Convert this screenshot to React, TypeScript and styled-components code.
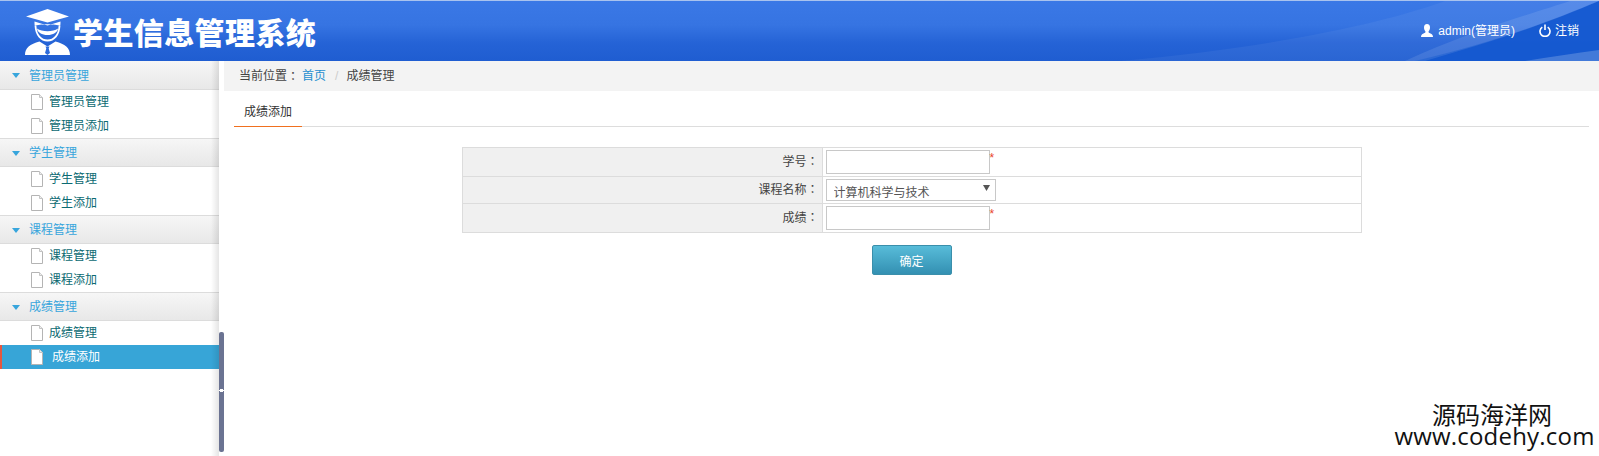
import React from "react";
import styled, { createGlobalStyle } from "styled-components";

const Global = createGlobalStyle`
  html, body { margin: 0; padding: 0; background: #fff; overflow: hidden; }
  body { font-family: "Liberation Sans", "Noto Sans CJK SC", sans-serif; font-size: 12px; color: #333; }
  * { box-sizing: border-box; }
`;

const Page = styled.div`
  position: relative;
  width: 1599px;
  height: 456px;
  overflow: hidden;
  display: flex;
  flex-direction: column;
`;

const Header = styled.header`
  position: relative;
  flex: 0 0 61px;
  display: flex;
  align-items: center;
  justify-content: space-between;
  padding: 0 20px 0 25px;
  border-top: 1px solid #a9c3ee;
  background: linear-gradient(180deg, #3a78e6 0%, #3674e2 40%, #2563d6 70%, #1f5dd1 100%);
  color: #fff;
  overflow: hidden;
`;

const Swoosh = styled.svg`
  position: absolute;
  inset: 0;
  width: 100%;
  height: 100%;
`;

const Brand = styled.div`
  position: relative;
  display: flex;
  align-items: center;
  gap: 3px;
`;

const Logo = styled.svg`
  width: 45px;
  height: 47px;
  margin-top: 3px;
  flex: none;
`;

const Title = styled.h1`
  margin: 0;
  font-family: "Noto Sans CJK SC", sans-serif;
  font-size: 30px;
  line-height: 36px;
  font-weight: 900;
  letter-spacing: 0.4px;
  white-space: nowrap;
`;

const UserBar = styled.div`
  position: relative;
  display: flex;
  align-items: center;
  margin-top: -1px;
`;

const UserLink = styled.a<{ $gap: number; $after?: number }>`
  display: flex;
  align-items: center;
  gap: ${(p) => p.$gap}px;
  margin-right: ${(p) => p.$after ?? 0}px;
  color: #fff;
  line-height: 16px;
  white-space: nowrap;
`;

const Body = styled.div`
  flex: 1;
  display: flex;
  min-height: 0;
`;

const Sidebar = styled.nav`
  flex: 0 0 219px;
  position: relative;
  background: #fff;
`;

const SideShade = styled.div`
  position: absolute;
  top: 0;
  bottom: 0;
  right: 0;
  width: 8px;
  background: linear-gradient(90deg, rgba(0, 0, 0, 0), rgba(0, 0, 0, 0.1));
  pointer-events: none;
`;

const GroupHead = styled.div`
  height: 29px;
  display: flex;
  align-items: center;
  padding: 1px 0 0 12px;
  gap: 9px;
  color: #37a5dc;
  background: linear-gradient(180deg, #f6f6f6, #e8e8e8);
  border-bottom: 1px solid #dcdcdc;
  line-height: 16px;
`;

const GroupHeadRow = styled(GroupHead)<{ $first?: boolean }>`
  border-top: ${(p) => (p.$first ? "none" : "1px solid #dcdcdc")};
`;

const Caret = styled.i`
  width: 0;
  height: 0;
  border-left: 4.5px solid transparent;
  border-right: 4.5px solid transparent;
  border-top: 5px solid #37a5dc;
`;

const Item = styled.div<{ $active?: boolean }>`
  height: 24px;
  display: flex;
  align-items: center;
  padding-left: ${(p) => (p.$active ? 29 : 31)}px;
  gap: ${(p) => (p.$active ? 9 : 6)}px;
  color: ${(p) => (p.$active ? "#fff" : "#0b6a72")};
  background: ${(p) => (p.$active ? "#37a5d7" : "transparent")};
  border-left: ${(p) => (p.$active ? "2px solid #e5573f" : "none")};
  line-height: 16px;
`;

const DocIcon = styled.svg`
  width: 12px;
  height: 16px;
  flex: none;
  margin-top: -1px;
`;

const Splitter = styled.div`
  flex: 0 0 5px;
  background: #fff;
  position: relative;
`;

const SplitBar = styled.div`
  position: absolute;
  left: 0;
  width: 5px;
  top: 271px;
  height: 120px;
  border-radius: 2px;
  background: #6b7392;
`;

const SplitGrip = styled.div`
  position: absolute;
  left: 0;
  top: 56px;
  width: 5px;
  height: 5px;
  background:
    linear-gradient(#fff, #fff) center / 5px 1px no-repeat,
    linear-gradient(#fff, #fff) center / 3px 3px no-repeat;
`;

const Main = styled.main`
  flex: 1;
  min-width: 0;
  display: flex;
  flex-direction: column;
`;

const Crumbs = styled.div`
  height: 30px;
  display: flex;
  align-items: center;
  padding-left: 15px;
  background: #f3f3f3;
  color: #444;
  line-height: 16px;
`;

const Colon = styled.span`
  font-family: "Noto Sans CJK TC", sans-serif;
`;

const CrumbLink = styled.a`
  color: #1f8fd0;
  margin-left: 3px;
`;

const CrumbSep = styled.span`
  color: #ccc;
  margin: 0 8px 0 9px;
`;

const TabBar = styled.div`
  margin: 0 10px;
  height: 36px;
  display: flex;
  align-items: flex-end;
  border-bottom: 1px solid #dddddd;
`;

const Tab = styled.div`
  width: 68px;
  height: 36px;
  margin-bottom: -1px;
  padding-top: 13px;
  text-align: center;
  color: #333;
  line-height: 16px;
  border-bottom: 1px solid #f0701f;
`;

const Table = styled.table`
  width: 900px;
  margin: 20px auto 0;
  border-collapse: collapse;
  table-layout: fixed;
`;

const LabelCell = styled.td`
  width: 360px;
  padding: 0 3px 2px 0;
  text-align: right;
  background: #f0f0f0;
  border: 1px solid #dcdcdc;
  color: #444;
  line-height: 16px;
`;

const FieldCell = styled.td`
  padding: 0 0 0 3px;
  border: 1px solid #dcdcdc;
`;

const Row = styled.tr<{ $h: number }>`
  height: ${(p) => p.$h}px;
`;

const FieldWrap = styled.div`
  display: flex;
  align-items: flex-start;
`;

const Input = styled.input`
  display: block;
  width: 164px;
  height: 24px;
  padding: 0 4px;
  border: 1px solid #c8c8c8;
  background: #fff;
  outline: none;
`;

const Star = styled.span`
  color: #e8452a;
  font-size: 12px;
  line-height: 14px;
  margin-top: 1px;
`;

const Select = styled.select`
  display: block;
  width: 170px;
  height: 22px;
  padding: 2px 0 0 7px;
  border: 1px solid #c8c8c8;
  border-radius: 0;
  appearance: none;
  background: #fff url("data:image/svg+xml,%3Csvg xmlns='http://www.w3.org/2000/svg' width='7' height='6'%3E%3Cpath d='M0 0h7L3.500 6z' fill='%23555'/%3E%3C/svg%3E") no-repeat 156px 5px;
  color: #555;
  font-family: "Noto Sans CJK SC", sans-serif;
  font-size: 12px;
  outline: none;
`;

const Actions = styled.div`
  display: flex;
  justify-content: center;
  margin-top: 12px;
`;

const Button = styled.button`
  width: 80px;
  height: 30px;
  padding: 0;
  border: 1px solid #3a8fab;
  border-radius: 2px;
  background: linear-gradient(180deg, #58bcd9, #3390b2);
  color: #fff;
  font-family: "Noto Sans CJK SC", sans-serif;
  font-size: 12px;
`;

const Watermark = styled.div`
  position: absolute;
  right: 3px;
  bottom: 9px;
  width: 203px;
  color: #111;
  text-align: center;
  font-size: 24px;
  line-height: 22px;
  font-family: "Noto Sans CJK SC", sans-serif;
`;

const WatermarkName = styled.div`
  padding-right: 5px;
`;

const WatermarkUrl = styled.div`
  font-family: "Open Sans", "Noto Sans", sans-serif;
  letter-spacing: 0.2px;
  white-space: nowrap;
`;

const Doc = () => (
  <DocIcon viewBox="0 0 12 16">
    <path d="M.5.5h8l3 3v12H.5z" fill="#fff" stroke="#b4b4b4" />
    <path d="M8.5.5v3h3" fill="#eee" stroke="#c4c4c4" />
  </DocIcon>
);

const groups = [
  { name: "管理员管理", items: ["管理员管理", "管理员添加"] },
  { name: "学生管理", items: ["学生管理", "学生添加"] },
  { name: "课程管理", items: ["课程管理", "课程添加"] },
  { name: "成绩管理", items: ["成绩管理", "成绩添加"] },
];

export default function App() {
  return (
    <Page>
      <Global />
      <Header>
        <Swoosh viewBox="0 0 1599 60" preserveAspectRatio="none">
          <path d="M1120 60C1280 46 1390 20 1445 0H1599V60Z" fill="#fff" opacity="0.05" />
          <path d="M1415 60C1500 40 1550 20 1599 0V60Z" fill="#1358cf" opacity="0.9" />
          <path d="M1405 60C1470 30 1540 10 1570 0H1599C1540 26 1480 44 1425 60Z" fill="#fff" opacity="0.1" />
          <path d="M1525 60C1550 56 1575 52 1599 49V60Z" fill="#fff" opacity="0.2" />
        </Swoosh>
        <Brand>
          <Logo viewBox="0 0 45 47">
            <path d="M1 7.500 22.500 0 44 7.500 22.500 13.500Z" fill="#fff" />
            <path d="M9.500 12.500c0 2 0 3 .3 4.500C14 14.500 31 14.500 35.200 17c.3-1.500.3-2.500.3-4.500l-13 4Z" fill="#fff" />
            <path d="M10.500 17c.5 9 5.500 14.500 12 14.500S34 26 34.500 17" fill="none" stroke="#fff" strokeWidth="1.800" />
            <path d="M12 19.500c5 3.500 16 3.500 21 0-.5 4-5 6.500-10.500 6.500S12.500 23.500 12 19.500Z" fill="#fff" />
            <path d="M0 46c0-7 5-11 14.500-13.500l8 5 8-5C40 35 45 39 45 46Z" fill="#fff" />
            <path d="M20.500 37.500h4l-.8 2 1.300 4.500-2.500 2-2.500-2 1.300-4.500Z" fill="#2e6cdc" />
          </Logo>
          <Title>学生信息管理系统</Title>
        </Brand>
        <UserBar>
          <UserLink $gap={5} $after={24}>
            <svg width="12" height="13" viewBox="0 0 12 13">
              <path d="M6 0c2 0 3 1.500 3 3.500C9 5.500 8 7 7.500 7.500c0 1 .5 1.500 2 2C11 10 12 11 12 13H0c0-2 1-3 2.500-3.500 1.500-.5 2-1 2-2C4 7 3 5.500 3 3.500 3 1.500 4 0 6 0Z" fill="#fff" />
            </svg>
            admin(管理员)
          </UserLink>
          <UserLink $gap={4}>
            <svg width="12" height="13" viewBox="0 0 12 13">
              <path d="M3.300 3.200a5 5 0 1 0 5.400 0" fill="none" stroke="#fff" strokeWidth="1.600" />
              <path d="M6 .5v5.500" stroke="#fff" strokeWidth="1.600" />
            </svg>
            注销
          </UserLink>
        </UserBar>
      </Header>
      <Body>
        <Sidebar>
          {groups.map((g, gi) => (
            <section key={g.name}>
              <GroupHeadRow $first={gi === 0}>
                <Caret />
                {g.name}
              </GroupHeadRow>
              {g.items.map((it, ii) => {
                const active = gi === 3 && ii === 1;
                return (
                  <Item key={it} $active={active}>
                    <Doc />
                    {it}
                  </Item>
                );
              })}
            </section>
          ))}
          <SideShade />
        </Sidebar>
        <Splitter>
          <SplitBar>
            <SplitGrip />
          </SplitBar>
        </Splitter>
        <Main>
          <Crumbs>
            当前位置<Colon>：</Colon>
            <CrumbLink>首页</CrumbLink>
            <CrumbSep>/</CrumbSep>
            成绩管理
          </Crumbs>
          <TabBar>
            <Tab>成绩添加</Tab>
          </TabBar>
          <Table>
            <tbody>
              <Row $h={29}>
                <LabelCell>学号<Colon>：</Colon></LabelCell>
                <FieldCell>
                  <FieldWrap>
                    <Input />
                    <Star>*</Star>
                  </FieldWrap>
                </FieldCell>
              </Row>
              <Row $h={27}>
                <LabelCell>课程名称<Colon>：</Colon></LabelCell>
                <FieldCell>
                  <Select defaultValue="cs">
                    <option value="cs">计算机科学与技术</option>
                  </Select>
                </FieldCell>
              </Row>
              <Row $h={29}>
                <LabelCell>成绩<Colon>：</Colon></LabelCell>
                <FieldCell>
                  <FieldWrap>
                    <Input />
                    <Star>*</Star>
                  </FieldWrap>
                </FieldCell>
              </Row>
            </tbody>
          </Table>
          <Actions>
            <Button>确定</Button>
          </Actions>
        </Main>
      </Body>
      <Watermark>
        <WatermarkName>源码海洋网</WatermarkName>
        <WatermarkUrl>www.codehy.com</WatermarkUrl>
      </Watermark>
    </Page>
  );
}
